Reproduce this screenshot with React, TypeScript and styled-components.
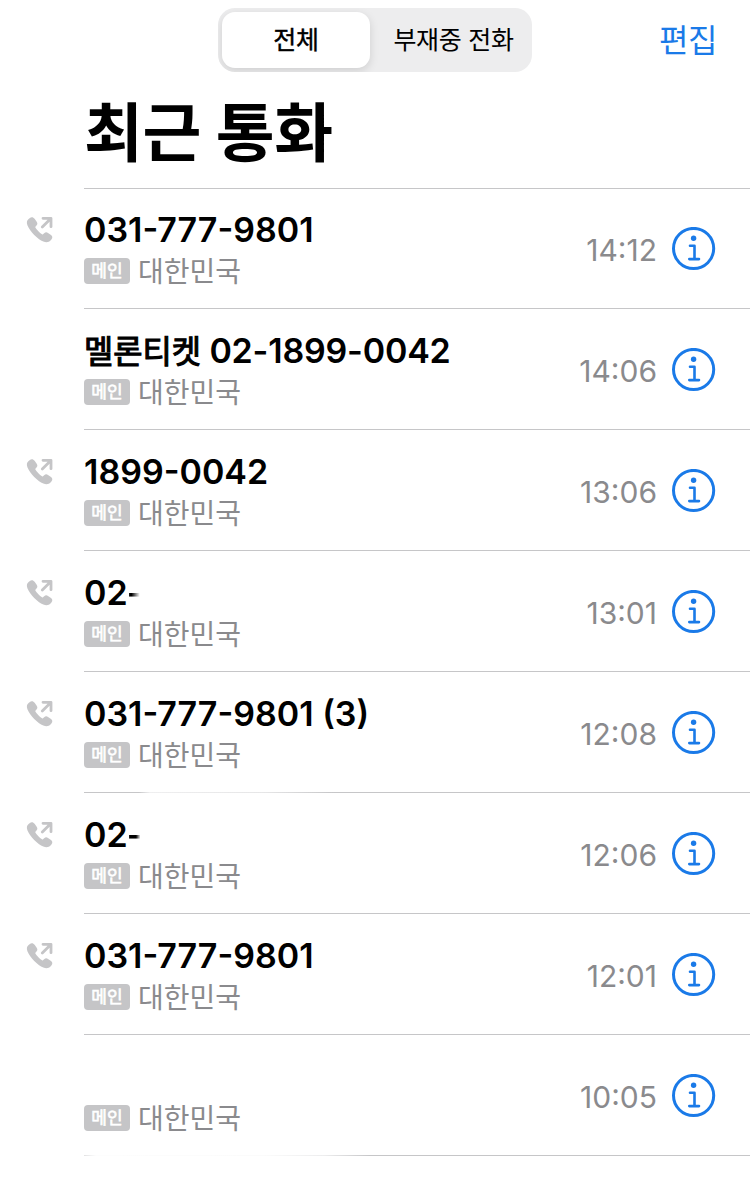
import React from "react";
import styled, { createGlobalStyle } from "styled-components";

const GlobalStyle = createGlobalStyle`
  * { box-sizing: border-box; }
  body { margin: 0; background: #fff; }
`;

const Screen = styled.main`
  width: 750px;
  height: 1190px;
  overflow: hidden;
  background: #fff;
  color: #000;
  font-family: Inter, "Noto Sans CJK KR", sans-serif;
`;

const NavBar = styled.header`
  display: grid;
  grid-template-columns: 218px 314px 1fr;
  height: 80px;
  padding-top: 8px;
`;

const Segments = styled.div`
  grid-column: 2;
  display: flex;
  height: 64px;
  padding: 4px;
  overflow: hidden;
  border-radius: 17px;
  background: #ededee;
`;

const Segment = styled.button<{ $active?: boolean }>`
  flex: ${(p) => (p.$active ? "0 0 148px" : "1")};
  height: 56px;
  padding: 0;
  padding-left: ${(p) => (p.$active ? "0" : "9px")};
  border: 0;
  border-radius: 13px;
  background: ${(p) => (p.$active ? "#fff" : "transparent")};
  box-shadow: ${(p) => (p.$active ? "0 3px 10px rgba(0, 0, 0, 0.13)" : "none")};
  color: #000;
  font: inherit;
  font-size: 25px;
  font-weight: 400;
  letter-spacing: -0.3px;
  line-height: 56px;
  white-space: nowrap;
  -webkit-text-stroke: ${(p) => (p.$active ? "0.4px #000" : "0")};
`;

const EditButton = styled.button`
  justify-self: end;
  height: 66px;
  margin-right: 33px;
  padding: 0;
  border: 0;
  background: none;
  color: #1a7ae8;
  font: inherit;
  font-size: 32px;
  line-height: 66px;
  letter-spacing: -0.5px;
`;

const Title = styled.h1`
  height: 108px;
  margin: 0 0 0 84px;
  font-size: 64px;
  font-weight: 700;
  line-height: 105px;
  letter-spacing: -0.4px;
`;

const CallList = styled.ul`
  margin: 0;
  padding: 0;
  list-style: none;
`;

const Row = styled.li<{ $first?: boolean }>`
  display: grid;
  grid-template-columns: 84px 1fr;
  height: ${(p) => (p.$first ? 120 : 121)}px;
`;

const Direction = styled.div<{ $first?: boolean }>`
  padding: ${(p) => (p.$first ? 28 : 29)}px 0 0 26px;
  svg { display: block; }
`;

const rules = {
  solid: "linear-gradient(#c6c6c8, #c6c6c8)",
  middle: "linear-gradient(90deg, #c6c6c8 55px, #efeff0 66px, #e6e6e7 180px, #c6c6c8 250px)",
  start: "linear-gradient(90deg, #e2e2e3 0, #fdfdfd 12px, #fbfbfb 180px, #ededee 240px, #c6c6c8 286px)",
};

const Body = styled.div<{ $first?: boolean; $rule: keyof typeof rules }>`
  display: flex;
  padding-top: ${(p) => (p.$first ? 21 : 22)}px;
  background: ${(p) => rules[p.$rule]} top / 100% 1px no-repeat;
`;

const Details = styled.div`
  flex: 1;
`;

const Name = styled.div<{ $tight?: boolean }>`
  height: 42px;
  font-size: 34px;
  font-weight: 600;
  letter-spacing: ${(p) => (p.$tight ? "-0.2px" : "0")};
  line-height: ${(p) => (p.$tight ? 41 : 42)}px;
  white-space: pre;
`;

const Hangul = styled.span`
  font-size: 31.8px;
  font-weight: 400;
  letter-spacing: 0;
  -webkit-text-stroke: 1.1px #000;
`;

const FadedDash = styled.span<{ $strong?: boolean }>`
  margin-left: -1px;
  background: linear-gradient(90deg, #000 ${(p) => (p.$strong ? "60%" : "30%")}, transparent ${(p) => (p.$strong ? "90%" : "85%")});
  background-clip: text;
  color: transparent;
`;

const Meta = styled.div`
  display: flex;
  align-items: center;
  gap: 8px;
  height: 40px;
`;

const Tag = styled.span`
  width: 46px;
  height: 26px;
  border-radius: 4px;
  background: #c5c5c7;
  color: #fff;
  font-size: 17px;
  font-weight: 400;
  line-height: 27px;
  text-align: center;
  -webkit-text-stroke: 0.6px #fff;
`;

const Place = styled.span`
  color: #8a8a8d;
  font-size: 28px;
  line-height: 40px;
  padding-top: 2px;
`;

const Time = styled.time`
  height: 42px;
  margin-top: 20px;
  color: #8a8a8d;
  font-size: 30px;
  font-feature-settings: "case";
  line-height: 43px;
`;

const InfoButton = styled.button`
  width: 44px;
  height: 44px;
  margin: 18px 34px 0 15px;
  padding: 0;
  border: 0;
  background: none;
  svg { display: block; }
`;

const InfoSpace = styled.div`
  display: flex;
  margin-left: -1px;
`;

const OutgoingIcon = () => (
  <svg width="28" height="28" viewBox="0 0 28 28">
    <path
      d="M3.6 2.2C5.3.7 7.3 1 8.6 2.8L10.7 5.7C11.8 7.3 11.5 8.5 10.3 9.7L9.6 10.4C9.2 10.8 9.2 11.2 9.5 11.7C11 14.1 13.6 16.7 16 18.2C16.5 18.5 16.9 18.5 17.3 18.1L18.1 17.3C19.3 16.1 20.6 15.9 22 16.9L25 19C26.6 20.2 26.8 21.9 25.4 23.5L24.5 24.6C22.8 26.5 20.2 26.8 17.3 25.6C14.4 24.4 11.2 22.1 8.2 19.1C5.1 15.9 2.6 12.3 1.4 9.3C.4 6.5.8 4.5 2.6 3.1Z"
      fill="#c5c5c7"
    />
    <path d="M17 2.3H25V10.7M24.6 2.8L16.3 11.1" fill="none" stroke="#c5c5c7" strokeWidth="2.8" strokeLinecap="round" strokeLinejoin="round" />
  </svg>
);

const InfoIcon = () => (
  <svg width="44" height="44" viewBox="0 0 44 44" fill="none" stroke="#1a7ae8">
    <circle cx="21.6" cy="21.5" r="20.1" strokeWidth="3" />
    <circle cx="21.6" cy="11.2" r="2.7" fill="#1a7ae8" stroke="none" />
    <path d="M18 18.7H22.5V32.1M17.3 32.1H27" strokeWidth="2.6" strokeLinecap="round" strokeLinejoin="round" />
  </svg>
);

interface Call {
  label?: string;
  name: string;
  time: string;
  outgoing?: boolean;
  dash?: "weak" | "strong";
  rule?: keyof typeof rules;
}

const calls: Call[] = [
  { name: "031-777-9801", time: "14:12", outgoing: true },
  { label: "멜론티켓", name: " 02-1899-0042", time: "14:06" },
  { name: "1899-0042", time: "13:06", outgoing: true },
  { name: "02", time: "13:01", outgoing: true, dash: "weak" },
  { name: "031-777-9801 (3)", time: "12:08", outgoing: true },
  { name: "02", time: "12:06", outgoing: true, dash: "strong", rule: "middle" },
  { name: "031-777-9801", time: "12:01", outgoing: true },
  { name: "", time: "10:05" },
];

export default function App() {
  return (
    <Screen>
      <GlobalStyle />
      <NavBar>
        <Segments>
          <Segment $active>전체</Segment>
          <Segment>부재중 전화</Segment>
        </Segments>
        <EditButton>편집</EditButton>
      </NavBar>
      <Title>최근 통화</Title>
      <CallList>
        {calls.map((call, i) => (
          <Row key={i} $first={i === 0}>
            <Direction $first={i === 0}>{call.outgoing && <OutgoingIcon />}</Direction>
            <Body $first={i === 0} $rule={call.rule ?? "solid"}>
              <Details>
                <Name $tight={Boolean(call.label)}>
                  {call.label && <Hangul>{call.label}</Hangul>}
                  {call.name}
                  {call.dash && <FadedDash $strong={call.dash === "strong"}>-</FadedDash>}
                </Name>
                <Meta>
                  <Tag>메인</Tag>
                  <Place>대한민국</Place>
                </Meta>
              </Details>
              <InfoSpace>
                <Time>{call.time}</Time>
                <InfoButton aria-label="정보">
                  <InfoIcon />
                </InfoButton>
              </InfoSpace>
            </Body>
          </Row>
        ))}
        <Row>
          <Direction />
          <Body $rule="start" />
        </Row>
      </CallList>
    </Screen>
  );
}
